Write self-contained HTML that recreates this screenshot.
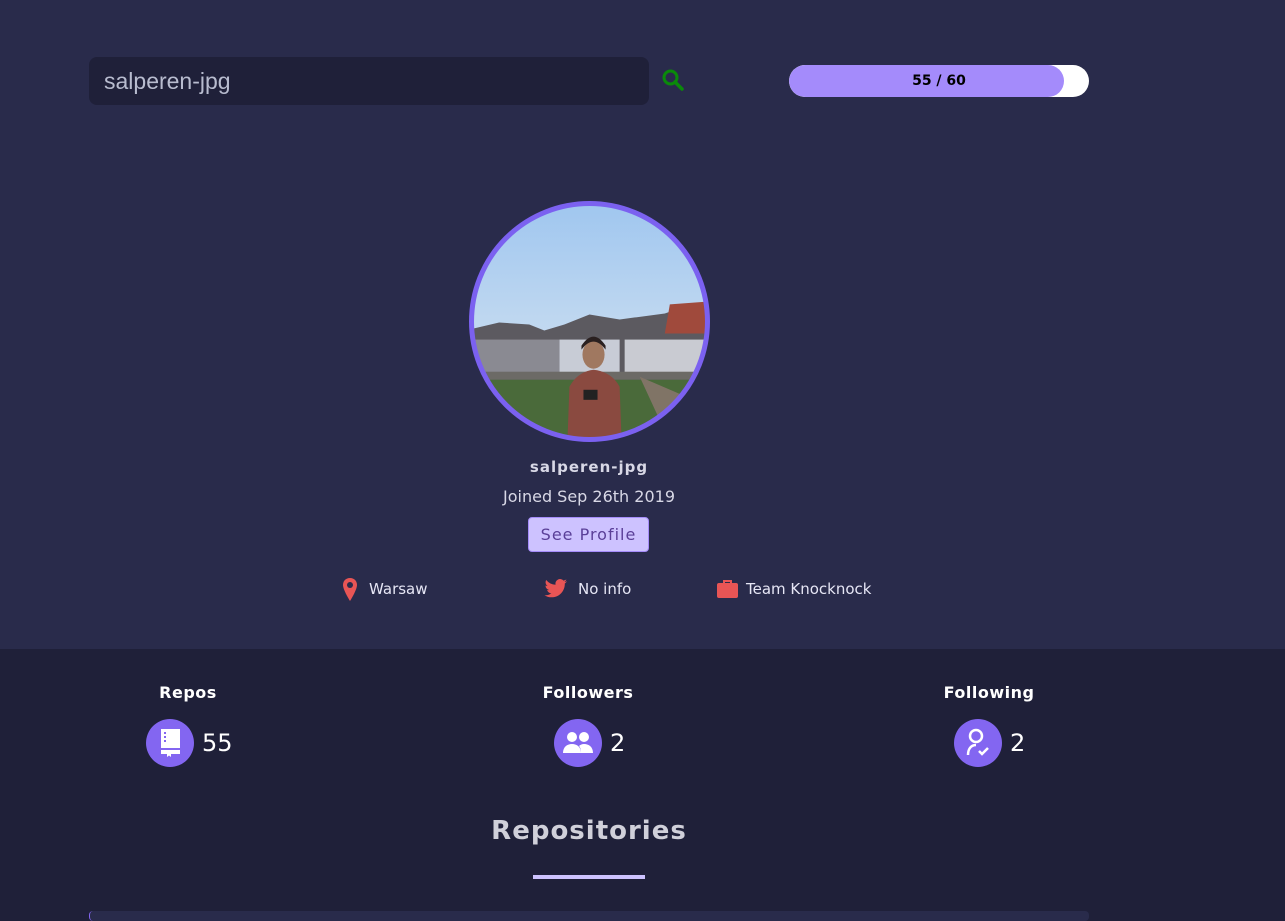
<!DOCTYPE html>
<html><head><meta charset="utf-8"><style>
*{margin:0;padding:0;box-sizing:border-box}
body{width:1285px;height:915px;overflow:hidden;background:#1f2039;font-family:"Liberation Sans",sans-serif;position:relative}
.top{position:absolute;left:0;top:0;width:1285px;height:649px;background:#292b4b}
.abs{position:absolute}
.os{font-family:"DejaVu Sans","Liberation Sans",sans-serif}
.search{left:89px;top:57px;width:560px;height:48px;background:#1f2039;border-radius:8px;color:#b8bccf;font-size:23px;padding:11px 15px}
.bar{left:789px;top:65px;width:300px;height:32px;background:#fff;border-radius:16px;overflow:hidden}
.fill{position:absolute;left:0;top:0;width:275px;height:32px;background:#a48bfb;border-radius:16px}
.bartxt{position:absolute;left:0;top:0;width:300px;text-align:center;line-height:32px;font-weight:bold;font-size:15px;color:#000}
.c{text-align:center}
.stat{color:#fff;font-weight:bold;font-size:16px;letter-spacing:.5px}
.circ{width:48px;height:48px;border-radius:50%;background:#8366f1;display:flex;align-items:center;justify-content:center}
.num{color:#fff;font-size:24px}
.info{color:#e6e6f5;font-size:15px}
</style></head><body>
<div class="top"></div>
<div class="abs search">salperen-jpg</div>
<svg class="abs" style="left:661px;top:68px" width="24" height="24" viewBox="0 0 24 24"><circle cx="9.5" cy="9.5" r="6.5" fill="none" stroke="#0a8a0a" stroke-width="3"/><path d="M14 14l7 7" stroke="#0a8a0a" stroke-width="3.5" stroke-linecap="round"/></svg>
<div class="abs bar"><div class="fill"></div><div class="bartxt os" style="font-size:14px">55 / 60</div></div>

<svg class="abs" style="left:469px;top:201px" width="241" height="241" viewBox="0 0 240 240">
<defs><clipPath id="cl"><circle cx="120" cy="120" r="117"/></clipPath>
<linearGradient id="sk" x1="0" y1="0" x2="0" y2="1"><stop offset="0" stop-color="#9fc6ef"/><stop offset="1" stop-color="#dfe9f2"/></linearGradient></defs>
<g clip-path="url(#cl)">
<rect width="240" height="240" fill="url(#sk)"/>
<path d="M0 128 L30 121 L60 123 L75 129 L95 123 L120 113 L150 118 L195 112 L215 105 L240 105 L240 180 L0 180Z" fill="#5c5a60"/>
<rect x="90" y="138" width="60" height="37" fill="#c8ccd6"/>
<rect x="155" y="138" width="85" height="37" fill="#c9cbd2"/>
<path d="M200 103 L240 100 L240 132 L195 132Z" fill="#a04a3c"/>
<rect x="0" y="138" width="90" height="37" fill="#8a8a92"/>
<rect x="0" y="170" width="240" height="8" fill="#6c6a66"/>
<path d="M0 178 L240 178 L240 240 L0 240Z" fill="#4a6a3a"/>
<path d="M170 175 L240 205 L240 240 L200 240Z" fill="#807466"/>
<ellipse cx="124" cy="153" rx="11" ry="14" fill="#a07860"/>
<path d="M112 148 Q124 132 136 148 L136 144 Q124 126 112 144Z" fill="#2a2020"/>
<path d="M98 240 L100 185 Q108 170 124 168 Q142 170 150 185 L152 240Z" fill="#8a4a40"/>
<rect x="114" y="188" width="14" height="10" fill="#222"/>
</g>
<circle cx="120" cy="120" r="117.5" fill="none" stroke="#7b61f0" stroke-width="5"/>
</svg>

<div class="abs c os" style="left:389px;top:458px;width:400px;color:#d8d8e6;font-weight:bold;font-size:15px;letter-spacing:1px">salperen-jpg</div>
<div class="abs c os" style="left:389px;top:487px;width:400px;color:#d8d8e6;font-size:16px">Joined Sep 26th 2019</div>
<div class="abs c os" style="left:528px;top:517px;width:121px;height:35px;background:#cdc2ff;border:1px solid #a58cfa;border-radius:4px;color:#5a3f98;font-size:16px;line-height:33px;letter-spacing:1px">See Profile</div>

<svg class="abs" style="left:342px;top:577px" width="16" height="25" viewBox="0 0 16 25"><path d="M8 1C3.5 1 1 4.3 1 8c0 5 7 16 7 16s7-11 7-16c0-3.7-2.5-7-7-7z" fill="#e85555"/><circle cx="8" cy="8" r="3" fill="#292b4b"/></svg>
<div class="abs info os" style="left:369px;top:580px">Warsaw</div>
<svg class="abs" style="left:544px;top:579px" width="24" height="20" viewBox="0 0 24 20"><path d="M23 2.3c-.8.4-1.7.6-2.6.7.9-.6 1.6-1.4 2-2.5-.9.5-1.9.9-2.9 1.1A4.6 4.6 0 0 0 11.6 5.8 13 13 0 0 1 2.2 1 4.6 4.6 0 0 0 3.6 7.1 4.6 4.6 0 0 1 1.5 6.5c0 2.2 1.6 4.1 3.7 4.5-.7.2-1.4.2-2.1.1.6 1.8 2.3 3.2 4.3 3.2A9.2 9.2 0 0 1 .5 16.2 13 13 0 0 0 7.6 18.3c8.5 0 13.2-7.1 13.2-13.2v-.6c.9-.6 1.7-1.4 2.2-2.2z" fill="#e85555"/></svg>
<div class="abs info os" style="left:578px;top:580px">No info</div>
<svg class="abs" style="left:717px;top:578px" width="21" height="21" viewBox="0 0 21 21"><path d="M7 5V3h7v2" fill="none" stroke="#e85555" stroke-width="2"/><rect x="0" y="5" width="21" height="15" rx="2" fill="#e85555"/></svg>
<div class="abs info os" style="left:746px;top:580px">Team Knocknock</div>

<div class="abs c stat os" style="left:88px;top:683px;width:200px">Repos</div>
<div class="abs c stat os" style="left:488px;top:683px;width:200px">Followers</div>
<div class="abs c stat os" style="left:889px;top:683px;width:200px">Following</div>

<div class="abs circ" style="left:146px;top:719px"><svg width="26" height="30" viewBox="0 0 26 30"><path d="M4 1h19v19H4z" fill="#fff"/><path d="M4 22h19v4H14v3l-2-1.5L10 29v-3H4z" fill="#fff"/><rect x="4" y="20" width="19" height="2" fill="#8366f1"/><rect x="7" y="4" width="2" height="2" fill="#8366f1"/><rect x="7" y="8" width="2" height="2" fill="#8366f1"/><rect x="7" y="12" width="2" height="2" fill="#8366f1"/></svg></div>
<div class="abs num os" style="left:202px;top:729px">55</div>
<div class="abs circ" style="left:554px;top:719px"><svg width="32" height="24" viewBox="0 0 32 24"><circle cx="10" cy="6" r="5" fill="#fff"/><circle cx="22" cy="6" r="5" fill="#fff"/><path d="M1 22c0-6 4-9 9-9s9 3 9 9z" fill="#fff"/><path d="M19 22c0-4-1-6-2-7 1-1 3-2 5-2 5 0 9 3 9 9z" fill="#fff"/></svg></div>
<div class="abs num os" style="left:610px;top:729px">2</div>
<div class="abs circ" style="left:954px;top:719px"><svg width="26" height="30" viewBox="0 0 26 30"><circle cx="11" cy="8" r="6" fill="none" stroke="#fff" stroke-width="2.5"/><path d="M3 27c0-6 3-10 8-10" fill="none" stroke="#fff" stroke-width="2.5"/><path d="M14 23l3 3 6-6" fill="none" stroke="#fff" stroke-width="2.5"/></svg></div>
<div class="abs num os" style="left:1010px;top:729px">2</div>

<div class="abs c os" style="left:389px;top:816px;width:400px;color:#d0d0da;font-weight:bold;font-size:26px;letter-spacing:1px">Repositories</div>
<div class="abs" style="left:533px;top:875px;width:112px;height:4px;background:#cdc2ff"></div>
<div class="abs" style="left:89px;top:911px;width:1000px;height:10px;background:#292b4b;border-radius:4px;border-left:1px solid #8366f1"></div>
</body></html>
